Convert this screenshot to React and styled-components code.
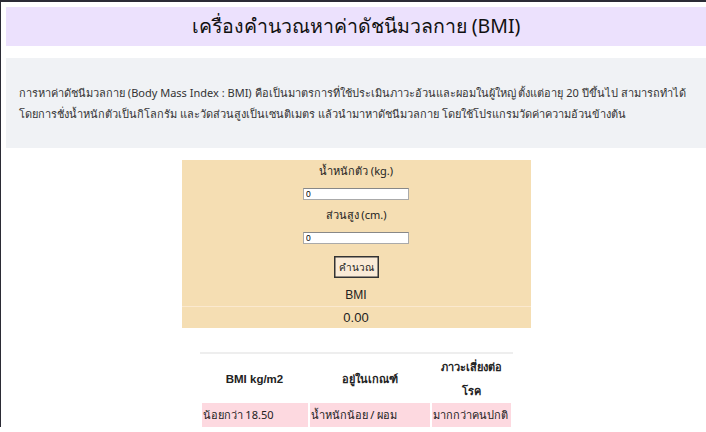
import React, { useState } from "react";
import styled, { createGlobalStyle } from "styled-components";

const GlobalStyle = createGlobalStyle`
  html, body {
    margin: 0;
    background: #ffffff;
  }
  body {
    border-top: 2px solid #2b2b35;
    border-left: 1px solid #2b2b35;
    font-family: "Noto Sans", "Liberation Sans", sans-serif;
    color: #222;
  }
`;

const Page = styled.div`
  padding: 5px 0 0 5px;
`;

const Header = styled.header`
  background: #ece1fd;
  height: 39px;
  display: flex;
  align-items: center;
  justify-content: center;

  h1 {
    margin: 0;
    font-size: 19.5px;
    font-weight: 400;
    color: #111;
  }
`;

const Intro = styled.section`
  margin-top: 12px;
  background: #f0f2f5;
  height: 90px;
  padding: 0 13px;
  display: flex;
  align-items: center;

  p {
    margin: 0;
    font-size: 11px;
    line-height: 21px;
    color: #333;
    white-space: nowrap;
  }
`;

const Calculator = styled.div`
  width: 349px;
  margin: 12px auto 0;
  background: #f5deb3;
  display: flex;
  flex-direction: column;
  align-items: center;
  padding-top: 2px;
`;

const Label = styled.label`
  font-size: 11px;
  line-height: 18px;
  color: #222;
  margin-bottom: 8px;
`;

const Input = styled.input`
  box-sizing: border-box;
  width: 106px;
  height: 12px;
  padding: 0 2px;
  border: 1px solid #aaa;
  border-top-color: #888;
  font-size: 8.5px;
  font-family: "Liberation Sans", sans-serif;
  margin-bottom: ${(p) => (p.$last ? "12px" : "6px")};
  outline: none;
`;

const Button = styled.button`
  box-sizing: border-box;
  height: 22px;
  padding: 0 4px;
  background: #faebd7;
  border: 1px solid #333;
  box-shadow: inset 0 0 0 0.5px #333;
  font-family: inherit;
  font-size: 10px;
  color: #222;
  cursor: pointer;
`;

const ResultRow = styled.div`
  align-self: stretch;
  text-align: center;
  font-family: "Liberation Sans", sans-serif;
  font-size: ${(p) => (p.$big ? "13px" : "12px")};
  line-height: 21px;
  color: #222;
  border-top: ${(p) => (p.$line ? "1px solid #fbe9cf" : "none")};
  margin-top: ${(p) => (p.$first ? "7px" : "0")};
`;

const Table = styled.table`
  margin: 24px auto 0;
  width: 313px;
  border-collapse: separate;
  border-spacing: 2px 0;
  border-top: 2px solid #eeeeee;
  table-layout: fixed;

  th {
    font-weight: 700;
    font-size: 11px;
    line-height: 24px;
    padding: 1px 2px 0;
    height: 48px;
    color: #222;
  }
  th:nth-child(1) { font-family: "Liberation Sans", sans-serif; font-size: 11.5px; }
  td {
    background: #fdd9e0;
    height: 24px;
    padding: 0 1px;
    font-size: 11px;
    color: #222;
    white-space: nowrap;
    overflow: hidden;
  }
`;

const Col = styled.col`
  width: ${(p) => p.$w}px;
`;

export default function App() {
  const [weight, setWeight] = useState("0");
  const [height, setHeight] = useState("0");
  const [bmi, setBmi] = useState("0.00");

  const calc = () => {
    const w = parseFloat(weight);
    const h = parseFloat(height) / 100;
    if (w > 0 && h > 0) setBmi((w / (h * h)).toFixed(2));
  };

  return (
    <Page>
      <GlobalStyle />
      <Header>
        <h1>เครื่องคำนวณหาค่าดัชนีมวลกาย (BMI)</h1>
      </Header>
      <Intro>
        <p>
          การหาค่าดัชนีมวลกาย (Body Mass Index : BMI) คือเป็นมาตรการที่ใช้ประเมินภาวะอ้วนและผอมในผู้ใหญ่ ตั้งแต่อายุ 20 ปีขึ้นไป สามารถทำได้
          <br />
          โดยการชั่งน้ำหนักตัวเป็นกิโลกรัม และวัดส่วนสูงเป็นเซนติเมตร แล้วนำมาหาดัชนีมวลกาย โดยใช้โปรแกรมวัดค่าความอ้วนข้างต้น
        </p>
      </Intro>
      <Calculator>
        <Label>น้ำหนักตัว (kg.)</Label>
        <Input value={weight} onChange={(e) => setWeight(e.target.value)} />
        <Label>ส่วนสูง (cm.)</Label>
        <Input $last value={height} onChange={(e) => setHeight(e.target.value)} />
        <Button onClick={calc}>คำนวณ</Button>
        <ResultRow $first>BMI</ResultRow>
        <ResultRow $line $big>{bmi}</ResultRow>
      </Calculator>
      <Table>
        <colgroup>
          <Col $w={106} />
          <Col $w={120} />
          <Col $w={79} />
        </colgroup>
        <thead>
          <tr>
            <th>BMI kg/m2</th>
            <th>อยู่ในเกณฑ์</th>
            <th>ภาวะเสี่ยงต่อโรค</th>
          </tr>
        </thead>
        <tbody>
          <tr>
            <td>น้อยกว่า 18.50</td>
            <td>น้ำหนักน้อย / ผอม</td>
            <td>มากกว่าคนปกติ</td>
          </tr>
        </tbody>
      </Table>
    </Page>
  );
}
